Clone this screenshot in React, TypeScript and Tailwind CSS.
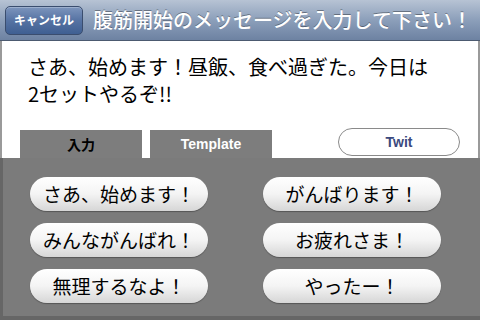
const jp = { fontFamily: '"Noto Sans CJK JP", "Noto Sans", sans-serif' };
const latin = { fontFamily: '"Liberation Sans", Arial, sans-serif' };

const templates = [
  ["さあ、始めます！", "がんばります！"],
  ["みんながんばれ！", "お疲れさま！"],
  ["無理するなよ！", "やったー！"],
];

function TemplateButton({ label }: { label: string }) {
  return (
    <button
      type="button"
      className="h-[34px] w-[178px] rounded-full bg-gradient-to-b from-white via-[#f4f4f4] to-[#d6d6d6] text-[19px] text-black shadow-[0_1px_1px_rgba(0,0,0,0.3)]"
      style={jp}
    >
      {label}
    </button>
  );
}

export default function App() {
  return (
    <div className="w-[480px] h-[320px] overflow-hidden flex flex-col bg-white">
      {/* navigation bar */}
      <header className="h-[41px] shrink-0 flex items-center bg-gradient-to-b from-[#b7c3d4] via-[#8c9fba] to-[#6d82a2] border-b border-[#4c5a70] px-[5px]">
        <button
          type="button"
          className="shrink-0 h-[29px] w-[78px] rounded-[5px] border border-[#3a4d6e] bg-gradient-to-b from-[#7d95bd] via-[#5673a3] to-[#3f5f92] text-white text-[12px] font-bold shadow-[inset_0_1px_0_rgba(255,255,255,0.25)]"
          style={jp}
        >
          キャンセル
        </button>
        <h1
          className="ml-[10px] text-white text-[20px] font-medium whitespace-nowrap [text-shadow:0_-1px_0_rgba(0,0,0,0.35)]"
          style={jp}
        >
          腹筋開始のメッセージを入力して下さい！
        </h1>
      </header>

      {/* message area */}
      <section className="h-[117px] shrink-0 flex flex-col border-x-2 border-[#9a9a9a] bg-white">
        <p className="pl-[26px] pr-[40px] pt-[12px] text-[20px] leading-[27px] text-black" style={jp}>
          さあ、始めます！昼飯、食べ過ぎた。今日は
          <br />
          2セットやるぞ!!
        </p>
        <div className="mt-auto flex items-end pl-[18px] pr-[18px]">
          <div
            className="h-[28px] w-[122px] bg-[#7d7d7d] flex items-center justify-center text-[14px] font-bold text-black"
            style={jp}
          >
            入力
          </div>
          <div
            className="ml-[8px] h-[28px] w-[122px] bg-[#7d7d7d] flex items-center justify-center text-[14px] font-bold text-white"
            style={latin}
          >
            Template
          </div>
          <button
            type="button"
            className="ml-auto mb-[2px] h-[28px] w-[122px] rounded-full border border-[#8a8a8a] bg-white text-[14px] font-bold text-[#3b4a7e]"
            style={latin}
          >
            Twit
          </button>
        </div>
      </section>

      {/* template list */}
      <section className="flex-1 bg-[#7b7b7b] flex flex-col">
        <div className="flex-1 border-l-[3px] border-[#666] pt-[19px] pl-[27px] flex flex-col gap-[12px]">
          {templates.map(([left, right]) => (
            <div key={left} className="flex gap-[55px]">
              <TemplateButton label={left} />
              <TemplateButton label={right} />
            </div>
          ))}
        </div>
        <div className="h-[4px] bg-[#666]" />
      </section>
    </div>
  );
}
